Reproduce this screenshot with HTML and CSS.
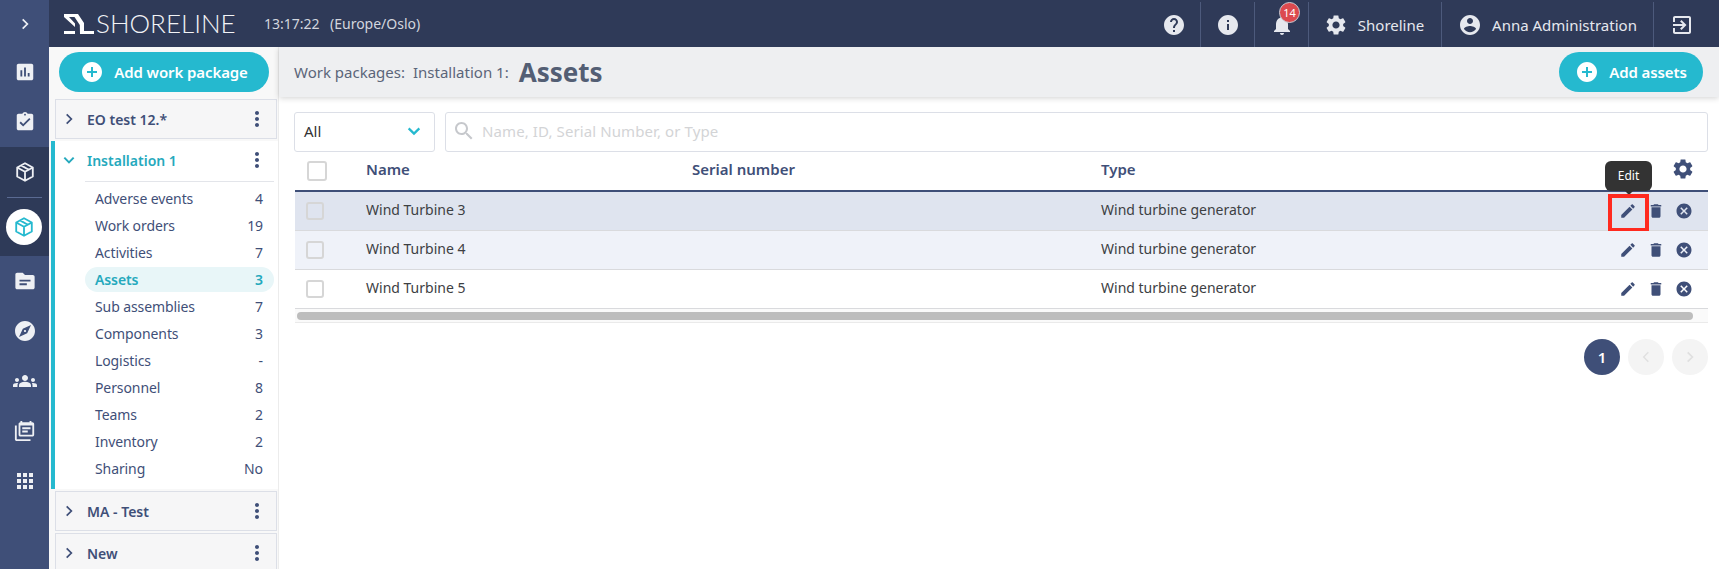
FILE: index.html
```html
<!DOCTYPE html>
<html lang="en">
<head>
  <meta charset="UTF-8">
  <title>Shoreline - Assets</title>
  <link rel="stylesheet" href="styles.css">
</head>
<body>
  <svg class="sprite" xmlns="http://www.w3.org/2000/svg">
    <symbol id="i-help" viewBox="0 0 24 24"><path d="M12 2C6.48 2 2 6.48 2 12s4.48 10 10 10 10-4.48 10-10S17.52 2 12 2zm1 17h-2v-2h2v2zm2.07-7.75l-.9.92C13.45 12.9 13 13.5 13 15h-2v-.5c0-1.1.45-2.1 1.17-2.83l1.24-1.26c.37-.36.59-.86.59-1.41 0-1.1-.9-2-2-2s-2 .9-2 2H8c0-2.21 1.79-4 4-4s4 1.79 4 4c0 .88-.36 1.68-.93 2.25z"/></symbol>
    <symbol id="i-info" viewBox="0 0 24 24"><path d="M12 2C6.48 2 2 6.48 2 12s4.48 10 10 10 10-4.48 10-10S17.52 2 12 2zm1 15h-2v-6h2v6zm0-8h-2V7h2v2z"/></symbol>
    <symbol id="i-bell" viewBox="0 0 24 24"><path d="M12 22c1.1 0 2-.9 2-2h-4c0 1.1.89 2 2 2zm6-6v-5c0-3.07-1.64-5.64-4.5-6.32V4c0-.83-.67-1.5-1.5-1.5s-1.5.67-1.5 1.5v.68C7.63 5.36 6 7.92 6 11v5l-2 2v1h16v-1l-2-2z"/></symbol>
    <symbol id="i-gear" viewBox="0 0 24 24"><path d="M19.14 12.94c.04-.3.06-.61.06-.94 0-.32-.02-.64-.07-.94l2.03-1.58c.18-.14.23-.41.12-.61l-1.92-3.32c-.12-.22-.37-.29-.59-.22l-2.39.96c-.5-.38-1.03-.7-1.62-.94l-.36-2.54c-.04-.24-.24-.41-.48-.41h-3.84c-.24 0-.43.17-.47.41l-.36 2.54c-.59.24-1.13.57-1.62.94l-2.39-.96c-.22-.08-.47 0-.59.22L2.74 8.87c-.12.21-.08.47.12.61l2.03 1.58c-.05.3-.09.63-.09.94s.02.64.07.94l-2.03 1.58c-.18.14-.23.41-.12.61l1.92 3.32c.12.22.37.29.59.22l2.39-.96c.5.38 1.03.7 1.62.94l.36 2.54c.05.24.24.41.48.41h3.84c.24 0 .44-.17.47-.41l.36-2.54c.59-.24 1.13-.56 1.62-.94l2.39.96c.22.08.47 0 .59-.22l1.92-3.32c.12-.22.07-.47-.12-.61l-2.01-1.58zM12 15.6c-1.98 0-3.6-1.62-3.6-3.6s1.62-3.6 3.6-3.6 3.6 1.62 3.6 3.6-1.62 3.6-3.6 3.6z"/></symbol>
    <symbol id="i-account" viewBox="0 0 24 24"><path d="M12 2C6.48 2 2 6.48 2 12s4.48 10 10 10 10-4.48 10-10S17.52 2 12 2zm0 3c1.66 0 3 1.34 3 3s-1.34 3-3 3-3-1.34-3-3 1.34-3 3-3zm0 14.2c-2.5 0-4.71-1.28-6-3.22.03-1.99 4-3.08 6-3.08 1.99 0 5.97 1.09 6 3.08-1.29 1.94-3.5 3.22-6 3.22z"/></symbol>
    <symbol id="i-exit" viewBox="0 0 24 24"><path d="M10.09 15.59L11.5 17l5-5-5-5-1.41 1.41L12.67 11H3v2h9.67l-2.58 2.59zM19 3H5c-1.11 0-2 .9-2 2v4h2V5h14v14H5v-4H3v4c0 1.1.89 2 2 2h14c1.1 0 2-.9 2-2V5c0-1.1-.9-2-2-2z"/></symbol>
    <symbol id="i-edit" viewBox="0 0 24 24"><path d="M3 17.25V21h3.75L17.81 9.94l-3.75-3.75L3 17.25zM20.71 7.04c.39-.39.39-1.02 0-1.41l-2.34-2.34c-.39-.39-1.02-.39-1.41 0l-1.83 1.83 3.75 3.75 1.83-1.83z"/></symbol>
    <symbol id="i-trash" viewBox="0 0 24 24"><path d="M6 19c0 1.1.9 2 2 2h8c1.1 0 2-.9 2-2V7H6v12zM19 4h-3.5l-1-1h-5l-1 1H5v2h14V4z"/></symbol>
    <symbol id="i-cancel" viewBox="0 0 24 24"><path d="M12 2C6.47 2 2 6.47 2 12s4.47 10 10 10 10-4.47 10-10S17.53 2 12 2zm5 13.59L15.59 17 12 13.41 8.41 17 7 15.59 10.59 12 7 8.41 8.41 7 12 10.59 15.59 7 17 8.41 13.41 12 17 15.59z"/></symbol>
    <symbol id="i-search" viewBox="0 0 24 24"><path d="M15.5 14h-.79l-.28-.27C15.41 12.59 16 11.11 16 9.5 16 5.91 13.09 3 9.5 3S3 5.91 3 9.5 5.91 16 9.5 16c1.61 0 3.09-.59 4.23-1.57l.27.28v.79l5 4.99L20.49 19l-4.99-5zm-6 0C7.01 14 5 11.99 5 9.5S7.01 5 9.5 5 14 7.01 14 9.5 11.99 14 9.5 14z"/></symbol>
    <symbol id="i-add" viewBox="0 0 24 24"><path d="M12 2C6.48 2 2 6.48 2 12s4.48 10 10 10 10-4.48 10-10S17.52 2 12 2zm5 11h-4v4h-2v-4H7v-2h4V7h2v4h4v2z"/></symbol>
    <symbol id="i-chart" viewBox="0 0 24 24"><path d="M19 3H5c-1.1 0-2 .9-2 2v14c0 1.1.9 2 2 2h14c1.1 0 2-.9 2-2V5c0-1.1-.9-2-2-2zM9 17H7v-7h2v7zm4 0h-2V7h2v10zm4 0h-2v-4h2v4z"/></symbol>
    <symbol id="i-task" viewBox="0 0 24 24"><path d="M19 3h-4.18C14.4 1.84 13.3 1 12 1c-1.3 0-2.4.84-2.82 2H5c-1.1 0-2 .9-2 2v14c0 1.1.9 2 2 2h14c1.1 0 2-.9 2-2V5c0-1.1-.9-2-2-2zm-7 0c.55 0 1 .45 1 1s-.45 1-1 1-1-.45-1-1 .45-1 1-1zm-2 14l-4-4 1.41-1.41L10 14.17l6.59-6.59L18 9l-8 8z"/></symbol>
    <symbol id="i-box" viewBox="0 0 24 24"><path fill="none" stroke="currentColor" stroke-width="2" stroke-linejoin="round" d="M12 2.5l8.5 4.6v9.8L12 21.5l-8.5-4.6V7.100zM3.500 7.100l8.500 4.700 8.500-4.700M12 11.800v9.700M7.700 4.800l8.500 4.700"/></symbol>
    <symbol id="i-folder" viewBox="0 0 24 24"><path fill-rule="evenodd" d="M3.500 3h6l2.500 2.500h8.500c1.100 0 2 .9 2 2V19c0 1.100-.9 2-2 2h-17c-1.100 0-2-.9-2-2V5c0-1.100.9-2 2-2zM6 10.500v2h12v-2zm0 4v2h8v-2z"/></symbol>
    <symbol id="i-compass" viewBox="0 0 24 24"><path d="M12 10.900c-.61 0-1.100.49-1.100 1.100s.49 1.100 1.100 1.100c.61 0 1.100-.49 1.100-1.100s-.49-1.100-1.100-1.100zM12 2C6.480 2 2 6.480 2 12s4.480 10 10 10 10-4.480 10-10S17.520 2 12 2zm2.190 12.190L6 18l3.810-8.190L18 6l-3.810 8.190z"/></symbol>
    <symbol id="i-groups" viewBox="0 0 24 24"><path d="M12 12.750c1.630 0 3.070.39 4.240.9 1.080.48 1.760 1.560 1.760 2.730V18H6v-1.610c0-1.180.68-2.260 1.760-2.730 1.170-.52 2.610-.91 4.240-.91zM4 13c1.100 0 2-.9 2-2s-.9-2-2-2-2 .9-2 2 .9 2 2 2zm1.130 1.100c-.37-.06-.74-.1-1.130-.1-.99 0-1.930.21-2.780.58C.48 14.900 0 15.620 0 16.430V18h4.500v-1.610c0-.83.23-1.610.63-2.290zM20 13c1.100 0 2-.9 2-2s-.9-2-2-2-2 .9-2 2 .9 2 2 2zm4 3.430c0-.81-.48-1.530-1.220-1.850-.85-.37-1.790-.58-2.780-.58-.39 0-.76.04-1.130.1.4.68.63 1.460.63 2.290V18H24v-1.570zM12 6c1.660 0 3 1.340 3 3s-1.340 3-3 3-3-1.340-3-3 1.340-3 3-3z"/></symbol>
    <symbol id="i-calendar" viewBox="0 0 24 24"><path fill-rule="evenodd" d="M7 1h2v1.500h8V1h2v1.500h1c1.100 0 2 .9 2 2V16c0 1.100-.9 2-2 2H7c-1.100 0-2-.9-2-2V4.500c0-1.100.9-2 2-2zM7 6v10h13V6zm2 2h9v2H9zm0 3.500h6v2H9zM1 6h2v15h15v2H3c-1.100 0-2-.9-2-2z"/></symbol>
    <symbol id="i-apps" viewBox="0 0 24 24"><path d="M4 8h4V4H4v4zm6 12h4v-4h-4v4zm-6 0h4v-4H4v4zm0-6h4v-4H4v4zm6 0h4v-4h-4v4zm6-10v4h4V4h-4zm-6 4h4V4h-4v4zm6 6h4v-4h-4v4zm0 6h4v-4h-4v4z"/></symbol>
    <symbol id="i-dots" viewBox="0 0 24 24"><path d="M12 8c1.100 0 2-.9 2-2s-.9-2-2-2-2 .9-2 2 .9 2 2 2zm0 2c-1.100 0-2 .9-2 2s.9 2 2 2 2-.9 2-2-.9-2-2-2zm0 6c-1.100 0-2 .9-2 2s.9 2 2 2 2-.9 2-2-.9-2-2-2z"/></symbol>
    <symbol id="i-right" viewBox="0 0 24 24"><path fill="none" stroke="currentColor" stroke-width="3" d="M8 4l8 8-8 8"/></symbol>
    <symbol id="i-down" viewBox="0 0 24 24"><path fill="none" stroke="currentColor" stroke-width="3.400" d="M4 8l8 8 8-8"/></symbol>
    <symbol id="i-left" viewBox="0 0 24 24"><path fill="none" stroke="currentColor" stroke-width="2.400" d="M16 4l-8 8 8 8"/></symbol>
  </svg>

  <nav class="rail">
    <div class="rail-item rail-top"><svg class="ic-14"><use href="#i-right"/></svg></div>
    <div class="rail-item"><svg class="ic-22"><use href="#i-chart"/></svg></div>
    <div class="rail-item"><svg class="ic-22"><use href="#i-task"/></svg></div>
    <div class="rail-group">
      <div class="rail-item"><svg class="ic-22"><use href="#i-box"/></svg></div>
      <div class="rail-line"></div>
      <div class="rail-active"><svg class="ic-22"><use href="#i-box"/></svg></div>
    </div>
    <div class="rail-item"><svg class="ic-22"><use href="#i-folder"/></svg></div>
    <div class="rail-item"><svg class="ic-24"><use href="#i-compass"/></svg></div>
    <div class="rail-item"><svg class="ic-24"><use href="#i-groups"/></svg></div>
    <div class="rail-item"><svg class="ic-22"><use href="#i-calendar"/></svg></div>
    <div class="rail-item"><svg class="ic-24"><use href="#i-apps"/></svg></div>
  </nav>

  <div class="page">
    <header class="topbar">
      <div class="brand">
        <svg class="logo" viewBox="0 0 30 20">
          <path d="M0 0h14l6 9v11h-4l-.2-9L10.500 3H5l6 6.500V13L0 3z"/>
          <path d="M0 17h11v3H0zM19 17h11v3H19z"/>
        </svg>
        <span class="brand-name">SHORELINE</span>
      </div>
      <span class="clock">13:17:22</span>
      <span class="zone">(Europe/Oslo)</span>
      <div class="top-actions">
        <div class="top-btn top-help"><svg class="ic-24"><use href="#i-help"/></svg></div>
        <div class="top-btn top-help"><svg class="ic-24"><use href="#i-info"/></svg></div>
        <div class="top-btn top-help">
          <svg class="ic-24"><use href="#i-bell"/></svg>
          <span class="badge">14</span>
        </div>
        <div class="top-btn top-org"><svg class="ic-24"><use href="#i-gear"/></svg><span>Shoreline</span></div>
        <div class="top-btn top-user"><svg class="ic-24"><use href="#i-account"/></svg><span>Anna Administration</span></div>
        <div class="top-btn top-exit"><svg class="ic-24"><use href="#i-exit"/></svg></div>
      </div>
    </header>

    <div class="body">
      <aside class="side">
        <button class="pill-btn add-wp"><svg class="ic-24"><use href="#i-add"/></svg>Add work package</button>

        <div class="card">
          <svg class="ic-14"><use href="#i-right"/></svg>
          <span class="card-name">EO test 12.*</span>
          <svg class="ic-24 dots"><use href="#i-dots"/></svg>
        </div>

        <div class="open-card">
          <div class="open-head">
            <svg class="ic-14"><use href="#i-down"/></svg>
            <span class="card-name">Installation 1</span>
            <svg class="ic-24 dots"><use href="#i-dots"/></svg>
          </div>
          <ul class="menu">
            <li><span>Adverse events</span><span>4</span></li>
            <li><span>Work orders</span><span>19</span></li>
            <li><span>Activities</span><span>7</span></li>
            <li class="current"><span>Assets</span><span>3</span></li>
            <li><span>Sub assemblies</span><span>7</span></li>
            <li><span>Components</span><span>3</span></li>
            <li><span>Logistics</span><span>-</span></li>
            <li><span>Personnel</span><span>8</span></li>
            <li><span>Teams</span><span>2</span></li>
            <li><span>Inventory</span><span>2</span></li>
            <li><span>Sharing</span><span>No</span></li>
          </ul>
        </div>

        <div class="card card-after">
          <svg class="ic-14"><use href="#i-right"/></svg>
          <span class="card-name">MA - Test</span>
          <svg class="ic-24 dots"><use href="#i-dots"/></svg>
        </div>
        <div class="card card-after">
          <svg class="ic-14"><use href="#i-right"/></svg>
          <span class="card-name">New</span>
          <svg class="ic-24 dots"><use href="#i-dots"/></svg>
        </div>
      </aside>

      <main class="main">
        <div class="crumbs">
          <span class="crumb">Work packages:</span>
          <span class="crumb">Installation 1:</span>
          <h1>Assets</h1>
          <button class="pill-btn add-assets"><svg class="ic-24"><use href="#i-add"/></svg>Add assets</button>
        </div>

        <div class="content">
          <div class="filters">
            <div class="select"><span>All</span><svg class="ic-16"><use href="#i-down"/></svg></div>
            <div class="search"><svg class="ic-24"><use href="#i-search"/></svg><span>Name, ID, Serial Number, or Type</span></div>
          </div>

          <div class="table">
            <div class="tr th">
              <div class="cell-check"><span class="check check-lg"></span></div>
              <div class="th-label">Name</div>
              <div class="th-label">Serial number</div>
              <div class="th-label">Type</div>
              <div class="cell-actions th-label"><svg class="ic-24 th-gear"><use href="#i-gear"/></svg></div>
            </div>
            <div class="tr selected">
              <div class="cell-check"><span class="check check-dim"></span></div>
              <div class="td">Wind Turbine 3</div>
              <div></div>
              <div class="td">Wind turbine generator</div>
              <div class="cell-actions">
                <svg class="ic-18"><use href="#i-edit"/></svg>
                <svg class="ic-18"><use href="#i-trash"/></svg>
                <svg class="ic-18"><use href="#i-cancel"/></svg>
              </div>
              <div class="tooltip">Edit</div>
              <div class="highlight"></div>
            </div>
            <div class="tr stripe">
              <div class="cell-check"><span class="check check-dim"></span></div>
              <div class="td">Wind Turbine 4</div>
              <div></div>
              <div class="td">Wind turbine generator</div>
              <div class="cell-actions">
                <svg class="ic-18"><use href="#i-edit"/></svg>
                <svg class="ic-18"><use href="#i-trash"/></svg>
                <svg class="ic-18"><use href="#i-cancel"/></svg>
              </div>
            </div>
            <div class="tr">
              <div class="cell-check"><span class="check"></span></div>
              <div class="td">Wind Turbine 5</div>
              <div></div>
              <div class="td">Wind turbine generator</div>
              <div class="cell-actions">
                <svg class="ic-18"><use href="#i-edit"/></svg>
                <svg class="ic-18"><use href="#i-trash"/></svg>
                <svg class="ic-18"><use href="#i-cancel"/></svg>
              </div>
            </div>
            <div class="scroll"><div class="thumb"></div></div>
          </div>

          <div class="pager">
            <span class="page-no">1</span>
            <span class="page-arrow"><svg class="ic-14"><use href="#i-left"/></svg></span>
            <span class="page-arrow"><svg class="ic-14"><use href="#i-right"/></svg></span>
          </div>
        </div>
      </main>
    </div>
  </div>
</body>
</html>
```

FILE: styles.css
```css
* { box-sizing: border-box; }
html, body { height: 100%; }
body {
  margin: 0;
  display: flex;
  overflow: hidden;
  font-family: 'Noto Sans', 'Open Sans', sans-serif;
  font-size: 14px;
  color: #3d4043;
  background: #fff;
}
.sprite { display: none; }
svg { fill: currentColor; flex: none; display: block; }
.ic-14 { width: 14px; height: 14px; }
.ic-16 { width: 16px; height: 16px; }
.ic-18 { width: 18px; height: 18px; }
.ic-22 { width: 22px; height: 22px; }
.ic-24 { width: 24px; height: 24px; }

/* left rail */
.rail {
  width: 49px;
  flex: none;
  background: #3f4f78;
  color: #eef0f4;
}
.rail-item {
  height: 50px;
  display: flex;
  align-items: center;
  justify-content: center;
}
.rail-top { height: 47px; }
.rail-group {
  background: #2e3a58;
  height: 109px;
}
.rail-line {
  height: 1px;
  margin: 0 7px;
  background: #5a6a92;
}
.rail-active {
  width: 36px;
  height: 36px;
  margin: 11px 0 0 6px;
  border-radius: 50%;
  background: #fff;
  color: #25b9cf;
  display: flex;
  align-items: center;
  justify-content: center;
}

/* top bar */
.page { flex: 1; min-width: 0; display: flex; flex-direction: column; }
.topbar {
  height: 47px;
  flex: none;
  background: #2f3a58;
  color: #e6e8ee;
  display: flex;
  align-items: center;
  position: relative;
  z-index: 2;
}
.brand { display: flex; align-items: center; width: 215px; padding-left: 15px; }
.logo { width: 30px; height: 20px; fill: #fff; margin-right: 2px; }
.brand-name {
  font-family: 'Lato', sans-serif;
  font-weight: 300;
  font-size: 26px;
  line-height: 47px;
  color: #f2f3f6;
}
.clock { font-size: 14px; color: #d3d6de; width: 66px; }
.zone { font-size: 14px; color: #d3d6de; }
.top-actions { margin-left: auto; display: flex; height: 45px; align-self: flex-end; }
.top-btn {
  display: flex;
  align-items: center;
  justify-content: center;
  gap: 10px;
  border-right: 1px solid #4d5a7c;
  position: relative;
  font-size: 15px;
}
.top-help { width: 54px; }
.top-org { width: 133px; padding-right: 2px; }
.top-user { width: 212px; }
.top-exit { width: 65px; border-right: 0; padding-right: 10px; }
.badge {
  position: absolute;
  top: 0;
  left: 24px;
  width: 21px;
  height: 21px;
  border: 1px solid #c9ccd4;
  border-radius: 50%;
  background: #dc4a4f;
  color: #fff;
  font-size: 11px;
  line-height: 19px;
  text-align: center;
}

/* work package column */
.body { flex: 1; display: flex; min-height: 0; }
.side {
  width: 230px;
  flex: none;
  background: #f8f8f8;
  border-right: 1px solid #ececec;
  padding: 5px 1px 0 2px;
  overflow: hidden;
  color: #3f4f78;
}
.pill-btn {
  height: 40px;
  border: 0;
  border-radius: 20px;
  background: #25b9cf;
  color: #fff;
  font-family: inherit;
  font-size: 15px;
  font-weight: 600;
  letter-spacing: -.1px;
  display: flex;
  align-items: center;
  justify-content: center;
  gap: 10px;
}
.add-wp { width: 210px; margin-left: 8px; }
.add-assets { width: 144px; margin-left: auto; }
.card {
  height: 40px;
  margin: 7px 0 0 4px;
  width: 222px;
  border: 1px solid #dcdfe7;
  background: #f6f6f7;
  display: flex;
  align-items: center;
  padding-left: 6px;
}
.card-after { margin-top: 2px; }
.card-name { font-weight: 600; font-size: 14px; margin-left: 11px; flex: 1; }
.dots { margin-right: 7px; }
.open-card {
  margin-top: 2px;
  height: 348px;
  border-left: 4px solid #25b9cf;
  background: #fff;
  width: 227px;
}
.open-head {
  height: 40px;
  display: flex;
  align-items: center;
  padding: 0 0 2px 7px;
  color: #25a9bd;
}
.open-head .dots { color: #3f4f78; margin-right: 9px; }
.menu {
  list-style: none;
  margin: 0 4px 0 30px;
  padding: 3px 0 0;
  border-top: 1px solid #e3e5ea;
}
.menu li {
  height: 27px;
  display: flex;
  align-items: center;
  justify-content: space-between;
  padding: 0 11px 0 10px;
  letter-spacing: -.1px;
}
.menu .current {
  height: 25px;
  margin: 1px 0;
  border-radius: 13px;
  background: #e8f6f8;
  color: #25a9bd;
  font-weight: 600;
}

/* main area */
.main { flex: 1; min-width: 0; display: flex; flex-direction: column; }
.crumbs {
  height: 50px;
  flex: none;
  background: #eeeff1;
  box-shadow: 0 1px 6px rgba(0, 0, 0, .18);
  display: flex;
  align-items: center;
  padding: 0 16px 0 15px;
  color: #5b6579;
  position: relative;
  z-index: 1;
}
.crumb { margin-right: 8px; font-size: 15px; }
h1 { margin: 0 0 0 2px; font-size: 26px; font-weight: 700; color: #535e74; }
.content { padding: 15px 11px 0 15px; }
.filters { display: flex; gap: 10px; height: 40px; }
.select, .search {
  border: 1px solid #dcdfe7;
  border-radius: 3px;
  display: flex;
  align-items: center;
  background: #fff;
  padding-bottom: 2px;
}
.select {
  width: 141px;
  padding: 0 12px 2px 9px;
  justify-content: space-between;
  color: #333;
  font-size: 15px;
}
.select svg { color: #25b9cf; }
.search {
  flex: 1;
  padding-left: 6px;
  color: #d3d4d6;
  gap: 6px;
  font-size: 15px;
  letter-spacing: .1px;
}
.search svg { color: #c6c8cc; }
.table { margin-left: 1px; }
.tr {
  display: grid;
  grid-template-columns: 71px 326px 409px 1fr auto;
  height: 39px;
  align-items: center;
  border-bottom: 1px solid #d9dadd;
  position: relative;
}
.th {
  height: 40px;
  border-bottom: 2px solid #3f4f78;
  color: #3f4f78;
  font-weight: 600;
  font-size: 15px;
}
.th-label { padding-bottom: 4px; }
.td { padding-bottom: 3px; }
.selected { background: #dfe4ef; }
.stripe { background: #eff2f9; }
.cell-check { padding-left: 11px; }
.check {
  display: block;
  width: 18px;
  height: 18px;
  border: 2px solid #d6d6d6;
  border-radius: 3px;
  background: #fff;
}
.check-lg { width: 20px; height: 20px; margin-left: 1px; }
.check-dim { background: transparent; }
.cell-actions {
  display: flex;
  align-items: center;
  gap: 10px;
  padding-right: 15px;
  color: #3f4f78;
}
.th-gear { margin-right: -2px; }
.tooltip {
  position: absolute;
  left: 1310px;
  top: -31px;
  width: 47px;
  height: 30px;
  border-radius: 6px;
  background: #333;
  color: #fff;
  font-size: 12px;
  font-weight: 400;
  line-height: 30px;
  text-align: center;
}
.tooltip::after {
  content: "";
  position: absolute;
  left: 19px;
  bottom: -4px;
  border: 5px solid transparent;
  border-top-color: #333;
  border-bottom: 0;
}
.highlight {
  position: absolute;
  left: 1313px;
  top: 2px;
  width: 41px;
  height: 38px;
  border: 4px solid #ff2a1f;
}
.scroll {
  height: 14px;
  border-bottom: 1px solid #eaeaea;
  background: #fafafa;
  padding: 3px 15px 2px 2px;
}
.thumb { height: 8px; border-radius: 4px; background: #bdbdbd; }
.pager {
  display: flex;
  justify-content: flex-end;
  gap: 8px;
  margin-top: 16px;
}
.pager span {
  width: 36px;
  height: 36px;
  border-radius: 50%;
  display: flex;
  align-items: center;
  justify-content: center;
}
.page-no { background: #3f4f78; color: #fff; font-weight: 600; font-size: 15px; }
.page-arrow { background: #f4f4f4; color: #e0e0e0; }
```
